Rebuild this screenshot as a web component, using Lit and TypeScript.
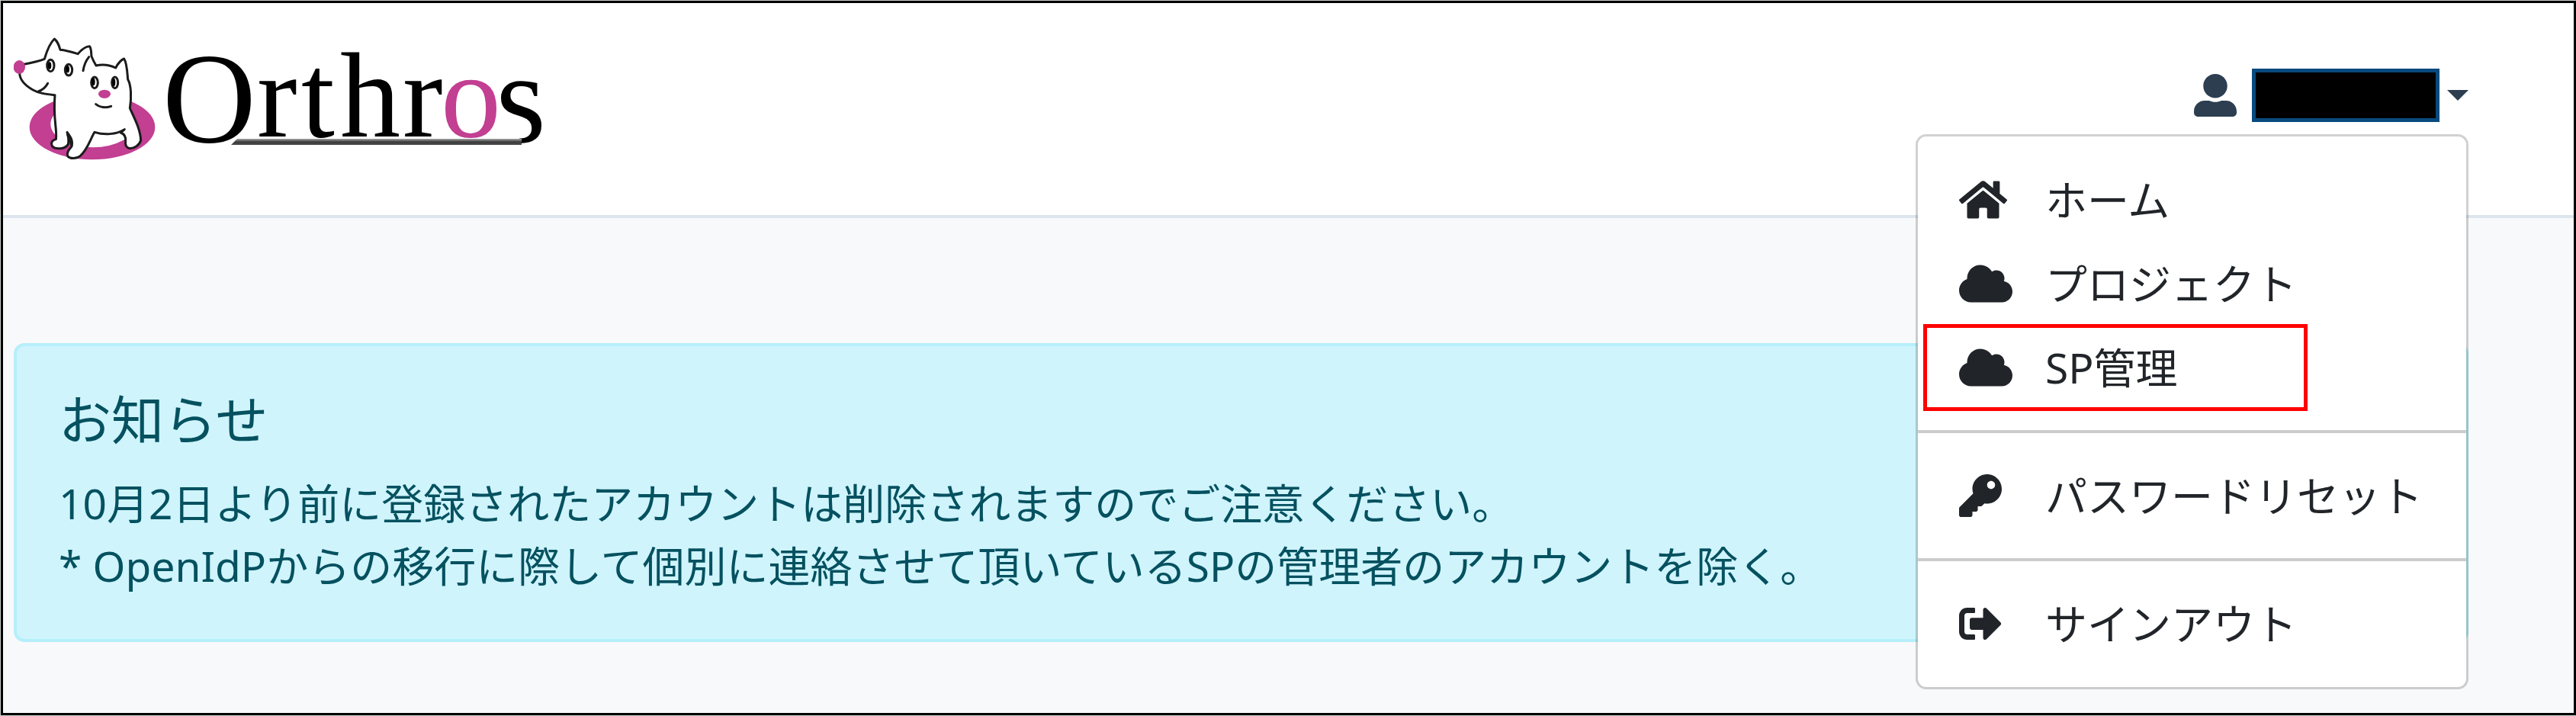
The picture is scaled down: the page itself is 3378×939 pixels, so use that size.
import { LitElement, html, css, svg } from "lit";
import { customElement, state } from "lit/decorators.js";

interface MenuItem {
  label: string;
  icon: keyof typeof ICONS;
  marked?: boolean;
}

const ICONS = {
  user: {
    width: 512,
    path: "M256 288c79.500 0 144-64.500 144-144S335.500 0 256 0 112 64.500 112 144s64.500 144 144 144zm128 32h-55.100c-22.200 10.200-46.900 16-72.900 16s-50.600-5.800-72.900-16H128C57.300 320 0 377.300 0 448v16c0 26.500 21.500 48 48 48h416c26.500 0 48-21.500 48-48v-16c0-70.700-57.300-128-128-128z",
  },
  home: {
    width: 576,
    path: "M280.370 148.260L96 300.110V464a16 16 0 0 0 16 16l112.060-.29a16 16 0 0 0 15.920-16V368a16 16 0 0 1 16-16h64a16 16 0 0 1 16 16v95.640a16 16 0 0 0 16 16.050L464 480a16 16 0 0 0 16-16V300L295.670 148.260a12.190 12.190 0 0 0-15.300 0zM571.600 251.470L488 182.560V44.050a12 12 0 0 0-12-12h-56a12 12 0 0 0-12 12v72.610L318.470 43a48 48 0 0 0-61 0L4.340 251.470a12 12 0 0 0-1.600 16.900l25.500 31A12 12 0 0 0 45.150 301l235.220-193.740a12.190 12.190 0 0 1 15.300 0L530.900 301a12 12 0 0 0 16.900-1.600l25.500-31a12 12 0 0 0-1.700-16.930z",
  },
  cloud: {
    width: 640,
    path: "M537.600 226.600c4.100-10.700 6.400-22.400 6.400-34.600 0-53-43-96-96-96-19.700 0-38.100 6-53.300 16.200C367 64.200 315.300 32 256 32c-88.400 0-160 71.600-160 160 0 2.700.1 5.400.2 8.100C40.200 219.800 0 273.200 0 336c0 79.500 64.500 144 144 144h368c70.700 0 128-57.300 128-128 0-61.900-44-113.600-102.400-125.400z",
  },
  key: {
    width: 512,
    path: "M512 176.001C512 273.203 433.202 352 336 352c-11.220 0-22.190-1.062-32.827-3.069l-24.012 27.014A23.999 23.999 0 0 1 261.223 384H224v40c0 13.255-10.745 24-24 24h-40v40c0 13.255-10.745 24-24 24H24c-13.255 0-24-10.745-24-24v-78.059c0-6.365 2.529-12.470 7.029-16.971l161.802-161.802C163.108 213.814 160 195.271 160 176 160 78.798 238.797.001 335.999 0 433.488-.001 512 78.511 512 176.001zM336 128c0 26.510 21.490 48 48 48s48-21.490 48-48-21.490-48-48-48-48 21.490-48 48z",
  },
  signOut: {
    width: 512,
    path: "M497 273L329 441c-15 15-41 4.500-41-17v-96H152c-13.300 0-24-10.700-24-24v-96c0-13.300 10.700-24 24-24h136V88c0-21.400 25.900-32 41-17l168 168c9.300 9.400 9.300 24.600 0 34zM192 436v-40c0-6.600-5.400-12-12-12H96c-17.700 0-32-14.300-32-32V160c0-17.700 14.300-32 32-32h84c6.600 0 12-5.400 12-12V76c0-6.600-5.400-12-12-12H96c-53 0-96 43-96 96v192c0 53 43 96 96 96h84c6.600 0 12-5.400 12-12z",
  },
};

const icon = (name: keyof typeof ICONS) => html`
  <svg class="icon" viewBox="0 0 ${ICONS[name].width} 512" aria-hidden="true">
    ${svg`<path d=${ICONS[name].path}></path>`}
  </svg>
`;

const MENU_GROUPS: MenuItem[][] = [
  [
    { label: "ホーム", icon: "home" },
    { label: "プロジェクト", icon: "cloud" },
    { label: "SP管理", icon: "cloud", marked: true },
  ],
  [{ label: "パスワードリセット", icon: "key" }],
  [{ label: "サインアウト", icon: "signOut" }],
];

@customElement("orthros-logo")
export class OrthrosLogo extends LitElement {
  static styles = css`
    :host {
      display: block;
    }
    .logo {
      display: block;
      width: 720px;
      height: 232px;
    }
    .word {
      font-family: "Liberation Serif", "Times New Roman", serif;
      font-size: 158px;
      fill: #000;
    }
    .initial,
    .last {
      font-size: 170px;
    }
    .pink {
      fill: #c23f92;
    }
    .ink {
      stroke: #1c1c1c;
      stroke-width: 9;
      stroke-linecap: round;
      stroke-linejoin: round;
    }
    .white {
      fill: #fff;
    }
    .line {
      fill: none;
    }
  `;

  render() {
    return html`
      <svg class="logo" viewBox="18 9 720 232" role="img" aria-label="Orthros">
        <defs>
          <linearGradient id="bar" x1="0" y1="0" x2="0" y2="1">
            <stop offset="0" stop-color="#aaa" />
            <stop offset="0.5" stop-color="#3c3c3c" />
            <stop offset="1" stop-color="#4a4a4a" />
          </linearGradient>
        </defs>
        <g transform="translate(10 40) scale(0.33333)">
          <ellipse class="pink" cx="333" cy="380" rx="247" ry="128" />
          <ellipse class="white" cx="335" cy="368" rx="166" ry="92" />
          <path
            class="ink white"
            d="M65 133 C90 128 120 122 145 112 C152 88 166 50 184 33 C198 44 202 58 207 76 C230 78 250 84 276 92 C290 76 305 62 322 62 C330 70 328 86 330 102 C336 116 342 128 348 138 C376 132 402 136 425 147 C434 130 446 116 458 111 C470 130 470 160 473 192 C486 215 488 262 481 306 C500 348 522 388 524 432 C518 452 500 464 480 464 C464 460 462 448 464 436 C466 420 460 408 445 402 L460 389 C425 410 380 412 342 400 C325 428 315 468 286 493 C270 506 246 506 236 494 C232 478 242 468 252 456 C258 432 246 416 234 400 C240 420 240 438 238 448 C225 468 188 468 176 456 C168 440 176 432 190 428 C196 390 178 350 186 254 C150 250 125 248 100 234 C68 216 48 194 47 168 Z"
          />
          <path class="ink line" d="M120 240 Q145 232 158 208" />
          <path class="ink line" d="M320 104 Q302 126 297 158" />
          <path class="ink line" d="M236 410 L252 452" />
          <ellipse class="ink white" cx="169" cy="138" rx="14" ry="23" />
          <ellipse class="ink white" cx="240" cy="155" rx="14" ry="22" />
          <ellipse class="ink white" cx="342" cy="205" rx="13" ry="22" />
          <ellipse class="ink white" cx="422" cy="205" rx="12" ry="22" />
          <ellipse cx="165" cy="138" rx="7" ry="14" />
          <ellipse cx="236" cy="152" rx="7" ry="14" />
          <ellipse cx="337" cy="202" rx="7" ry="15" />
          <ellipse cx="418" cy="204" rx="6" ry="15" />
          <ellipse class="pink" cx="46" cy="144" rx="23" ry="27" />
          <ellipse class="pink" cx="381" cy="250" rx="24" ry="17" />
          <path class="ink line" d="M347 290 Q374 310 407 298" />
        </g>
        <text class="word last" x="650" y="186">s</text>
        <path class="white" d="M650 154 L666 154 L682 183 L650 190 Z" />
        <path fill="url(#bar)" d="M303 190 L311 182 H684 V190 Z" />
        <text class="word" y="179">
          <tspan class="initial" x="213" y="186">O</tspan><tspan x="337" y="179">r</tspan><tspan x="395">t</tspan><tspan x="446">h</tspan><tspan x="528">r</tspan><tspan class="pink" x="578">o</tspan>
        </text>
      </svg>
    `;
  }
}

@customElement("user-menu")
export class UserMenu extends LitElement {
  @state() private open = true;

  static styles = css`
    :host {
      display: block;
      position: relative;
    }
    .toggle {
      display: flex;
      align-items: center;
      padding: 0;
      border: 0;
      background: none;
      color: #2c3e50;
      cursor: pointer;
    }
    .icon {
      display: block;
      height: 56px;
      fill: currentColor;
    }
    .name {
      box-sizing: border-box;
      width: 246px;
      height: 70px;
      margin: 0 10px 0 20px;
      border: 5px solid #084a7e;
      background: #000;
    }
    .caret {
      border: 14px solid transparent;
      border-top-color: currentColor;
      border-bottom: 0;
    }
    .menu {
      position: absolute;
      z-index: 1;
      top: 100%;
      right: 0;
      box-sizing: border-box;
      min-width: 725px;
      margin: 16px 0 0;
      padding: 28px 0;
      border: 3px solid rgba(0, 0, 0, 0.18);
      border-radius: 14px;
      background: #fff;
      background-clip: padding-box;
    }
    .item {
      position: relative;
      display: grid;
      grid-template-columns: 113px auto;
      align-items: center;
      height: 110px;
      padding: 0 54px;
      color: #212529;
      font-size: 55px;
      line-height: 82px;
      text-decoration: none;
      white-space: nowrap;
    }
    .mark {
      position: absolute;
      inset: -2px auto -2px 7px;
      box-sizing: border-box;
      width: 504px;
      border: 5px solid #f00;
    }
    .divider {
      height: 4px;
      margin: 27px 0;
      border: 0;
      background: #ccc;
    }
  `;

  private toggle() {
    this.open = !this.open;
  }

  private renderItem(item: MenuItem) {
    return html`
      <a class="item" href="#" role="menuitem">
        ${icon(item.icon)}<span>${item.label}</span>
        ${item.marked ? html`<span class="mark"></span>` : null}
      </a>
    `;
  }

  render() {
    return html`
      <button
        class="toggle"
        type="button"
        aria-label="User menu"
        aria-expanded=${this.open}
        @click=${this.toggle}
      >
        ${icon("user")}
        <span class="name"></span>
        <span class="caret"></span>
      </button>
      ${this.open
        ? html`<nav class="menu" role="menu">
            ${MENU_GROUPS.map(
              (group, i) => html`
                ${i ? html`<hr class="divider" />` : null}
                ${group.map((item) => this.renderItem(item))}
              `
            )}
          </nav>`
        : null}
    `;
  }
}

@customElement("app-root")
export class AppRoot extends LitElement {
  static styles = css`
    :host {
      display: flex;
      box-sizing: border-box;
      min-height: 100vh;
      padding: 1px 0 1px 1px;
      background: #c8cfcb;
      font-family: "Noto Sans", "Noto Sans CJK JP", sans-serif;
    }
    .page {
      flex: 1;
      min-width: 0;
      border: 3px solid #000;
      background: #f8f9fb;
    }
    .header {
      display: flex;
      align-items: center;
      justify-content: space-between;
      padding: 5px 138px 41px 14px;
      border-bottom: 4px solid #dde5ef;
      background: #fff;
    }
    .content {
      padding: 164px 138px 92px 14px;
    }
    .alert {
      padding: 55px;
      border: 4px solid #b6effb;
      border-radius: 14px;
      background: #cff4fc;
      color: #055160;
      font-size: 55px;
      line-height: 82px;
    }
    .title {
      margin: 0 0 27px;
      font-size: 69px;
      font-weight: 400;
      line-height: 83px;
    }
    .text {
      margin: 0;
    }
  `;

  render() {
    return html`
      <div class="page">
        <header class="header">
          <orthros-logo></orthros-logo>
          <user-menu></user-menu>
        </header>
        <main class="content">
          <section class="alert" role="alert">
            <h4 class="title">お知らせ</h4>
            <p class="text">
              10月2日より前に登録されたアカウントは削除されますのでご注意ください。<br />
              * OpenIdPからの移行に際して個別に連絡させて頂いているSPの管理者のアカウントを除く。
            </p>
          </section>
        </main>
      </div>
    `;
  }
}
